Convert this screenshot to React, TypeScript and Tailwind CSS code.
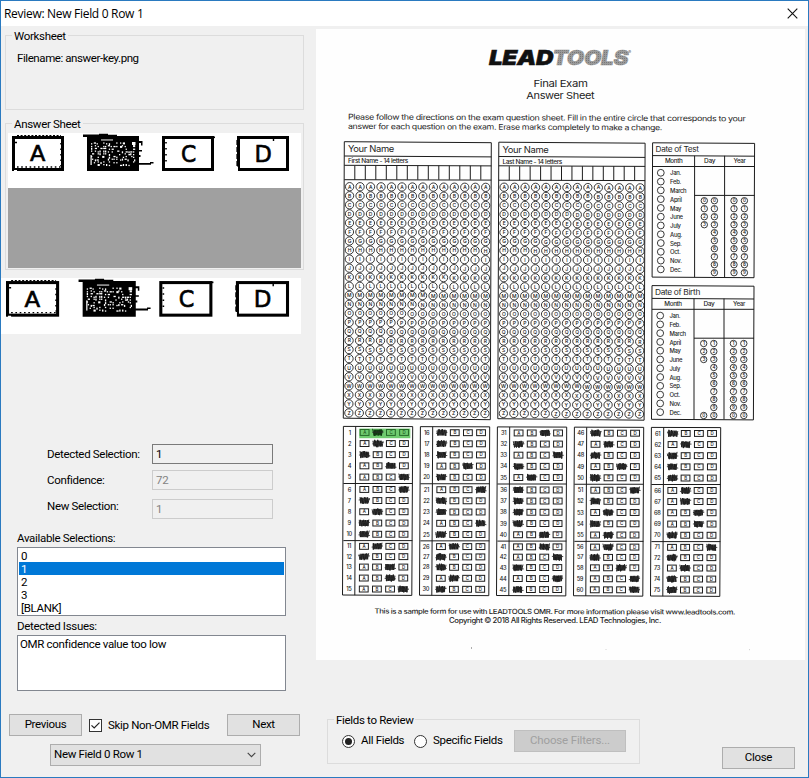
import type { ReactNode } from 'react';

const SHEET_FONT = 'Inter, "Noto Sans", sans-serif';

// Small deterministic generator so scribbles look the same on every render.
function makeRandom(seed: number) {
  let s = seed * 7919 + 17;
  return () => {
    s = (s * 1103515245 + 12345) % 2147483648;
    return s / 2147483648;
  };
}

type LineProps = {
  x: number;
  y: number;
  size: number;
  w?: number;
  weight?: number;
  rotate?: number;
  fill?: string;
  children: ReactNode;
};

function Line({ x, y, size, w, weight = 400, rotate = 0, fill = '#1e1e1e', children }: LineProps) {
  return (
    <text
      x={x}
      y={y}
      fontSize={size}
      fontWeight={weight}
      fill={fill}
      textLength={w}
      lengthAdjust="spacingAndGlyphs"
      transform={rotate ? `rotate(${rotate} ${x} ${y})` : undefined}
    >
      {children}
    </text>
  );
}

function Bubble({ x, y, r, label, size }: { x: number; y: number; r: number; label?: string; size: number }) {
  return (
    <g>
      <circle cx={x} cy={y} r={r} fill="none" stroke="#222" strokeWidth={0.9} />
      {label && (
        <text x={x} y={y + size * 0.36} fontSize={size} textAnchor="middle" fill="#111" fontWeight={500}>
          {label}
        </text>
      )}
    </g>
  );
}

const LETTERS = 'ABCDEFGHIJKLMNOPQRSTUVWXYZ'.split('');

function NameBlock({ x, y, w, subtitle, subW }: { x: number; y: number; w: number; subtitle: string; subW: number }) {
  const step = w / 14;
  return (
    <g>
      <path
        d={`M${x} ${y} L${x + w} ${y + 1} L${x + w - 1} ${y + 278} L${x - 1} ${y + 276.5} Z`}
        fill="none"
        stroke="#1c1c1c"
        strokeWidth={1}
      />
      <path
        d={`M${x} ${y + 14.3} L${x + w} ${y + 15.2} M${x} ${y + 23.6} L${x + w} ${y + 24.2} M${x} ${y + 38} L${x + w} ${y + 38.4}`}
        stroke="#1c1c1c"
        strokeWidth={1}
      />
      {Array.from({ length: 13 }, (_, i) => (
        <path
          key={i}
          d={`M${x + step * (i + 1)} ${y + 24} V${y + 38}`}
          stroke="#1c1c1c"
          strokeWidth={1}
        />
      ))}
      <Line x={x + 3.7} y={y + 10.3} size={8.8} w={46}>Your Name</Line>
      <Line x={x + 3.7} y={y + 21.3} size={5.6} w={subW} weight={500}>{subtitle}</Line>
      {LETTERS.map((l, r) =>
        Array.from({ length: 14 }, (_, c) => (
          <Bubble
            key={`${l}${c}`}
            x={x + 5.3 + c * 10.47 - r * 0.03}
            y={y + 45 + r * 9.05 + c * 0.05}
            r={4.15}
            label={l}
            size={5}
          />
        )),
      )}
    </g>
  );
}

const MONTHS = ['Jan.', 'Feb.', 'March', 'April', 'May', 'June', 'July', 'Aug.', 'Sep.', 'Oct.', 'Nov.', 'Dec.'];

type DateProps = { x: number; y: number; h: number; title: string; titleW: number; digits: string[]; tens: string[]; };

function DateBlock({ x, y, h, title, titleW, digits, tens }: DateProps) {
  return (
    <g>
      <path
        d={`M${x} ${y} L${x + 102} ${y + 0.6} L${x + 101.4} ${y + h + 0.6} L${x - 0.5} ${y + h} Z`}
        fill="none"
        stroke="#1c1c1c"
        strokeWidth={1}
      />
      <path
        d={`M${x} ${y + 12.8} L${x + 102} ${y + 13.4} M${x} ${y + 23.7} H${x + 102} M${x + 42} ${y + 13} V${y + h} M${x + 72} ${y + 13} V${y + h} M${x + 42} ${y + 52.6} H${x + 102}`}
        stroke="#1c1c1c"
        strokeWidth={1}
      />
      <Line x={x + 3} y={y + 9.2} size={7.6} w={titleW}>{title}</Line>
      <Line x={x + 12.3} y={y + 20.6} size={5.7} w={17.5} weight={500}>Month</Line>
      <Line x={x + 51.5} y={y + 20.6} size={5.7} w={11} weight={500}>Day</Line>
      <Line x={x + 81} y={y + 20.6} size={5.7} w={12} weight={500}>Year</Line>
      {MONTHS.map((m, i) => (
        <g key={m}>
          <Bubble x={x + 8.2} y={y + 30 + i * 8.78} r={3.4} size={4} />
          <Line x={x + 17.5} y={y + 32.6 + i * 8.78} size={5.9} weight={500}>{m}</Line>
        </g>
      ))}
      {digits.map((d, i) => {
        const cy = y + 57.9 + i * 8;
        return (
          <g key={d}>
            {tens.includes(d) && <Bubble x={x + 51.7} y={cy} r={3.2} label={d} size={4.6} />}
            <Bubble x={x + 61.8} y={cy} r={3.2} label={d} size={4.6} />
            <Bubble x={x + 81.4} y={cy} r={3.2} label={d} size={4.6} />
            <Bubble x={x + 91.8} y={cy} r={3.2} label={d} size={4.6} />
          </g>
        );
      })}
    </g>
  );
}

const ANSWERS = ['BBACDDABAABACCD', 'AAACADAADABAABA', 'CADABAAAACCDADA', 'ABACADABABBACDD', 'ABAAABBCCADABAA'];
const ROW_Y = [432.4, 443.5, 454.6, 465.8, 477, 489.4, 500.5, 511.7, 523, 534.2, 546.3, 556.6, 567, 578, 589];

function Scribble({ x, y, seed, green }: { x: number; y: number; seed: number; green?: boolean }) {
  const rnd = makeRandom(seed);
  const points: string[] = [];
  for (let i = 0; i <= 12; i++) {
    const px = x - 4.6 + (i * 9.2) / 12 + (rnd() - 0.5) * 1.4;
    const py = y + (i % 2 ? 2.8 : -2.8) + (rnd() - 0.5) * 1.8;
    points.push(`${px.toFixed(1)},${py.toFixed(1)}`);
  }
  return (
    <g>
      <rect x={x - 4.3} y={y - 2.9} width={8.6} height={5.9} fill={green ? '#1f5a22' : '#4a4a4a'} />
      <polyline points={points.join(' ')} fill="none" stroke={green ? '#0f3511' : '#1c1c1c'} strokeWidth={0.9} />
      <path d={`M${x - 5.5} ${y + rnd() * 2 - 1} L${x + 5.8} ${y + rnd() * 3 - 1.5}`} stroke="#2a2a2a" strokeWidth={0.9} />
    </g>
  );
}

function AnswerBlock({ index }: { index: number }) {
  const x = 343.4 + index * 77;
  const dy = index * 0.25;
  return (
    <g>
      <path
        d={`M${x} ${426.4 + dy} L${x + 69.3} ${426.6 + dy} L${x + 68.4} ${595.4 + dy} L${x - 0.9} ${595 + dy} Z M${x + 12.3} ${426.5 + dy} L${x + 11.4} ${595.2 + dy} M${x} ${483.5 + dy} H${x + 69} M${x} ${540.6 + dy} H${x + 69}`}
        fill="none"
        stroke="#1c1c1c"
        strokeWidth={1}
      />
      {index === 0 && <rect x={359.3} y={428.6} width={51} height={9.6} fill="#6fcb6f" />}
      {ROW_Y.map((ry, r) => {
        const y = ry + dy;
        const shift = -r * 0.06;
        const green = index === 0 && r === 0;
        return (
          <g key={r}>
            <text x={x + 6.3 + shift} y={y + 2.1} fontSize={5.7} fontWeight={500} textAnchor="middle" fill="#1a1a1a">
              {index * 15 + r + 1}
            </text>
            {['A', 'B', 'C', 'D'].map((l, c) => {
              const cx = x + 21.2 + c * 13.15 + shift;
              if (ANSWERS[index][r] === l) return <Scribble key={l} x={cx} y={y} seed={index * 15 + r + 1} green={green} />;
              return (
                <g key={l}>
                  <rect x={cx - 4.4} y={y - 2.9} width={8.8} height={5.9} fill="none" stroke={green ? '#256b28' : '#1c1c1c'} strokeWidth={1} />
                  <text x={cx} y={y + 1.6} fontSize={4.4} fontWeight={500} textAnchor="middle" fill={green ? '#1d5a20' : '#111'}>
                    {l}
                  </text>
                </g>
              );
            })}
          </g>
        );
      })}
    </g>
  );
}

function ScannedSheet() {
  return (
    <svg className="block h-[631px] w-[489px] bg-[#fefefe]" viewBox="316 29 489 631" fontFamily={SHEET_FONT}>
      <defs>
        <pattern id="halftone" width="2" height="2" patternUnits="userSpaceOnUse">
          <rect width="2" height="2" fill="#9a9a9a" />
          <rect width="1" height="1" fill="#787878" />
        </pattern>
      </defs>
      <g fontStyle="italic">
        <text x={489} y={65} fontSize={20.5} fontWeight={900} textLength={64} lengthAdjust="spacingAndGlyphs" fill="#111" stroke="#111" strokeWidth={0.5}>LEAD</text>
        <text x={552.5} y={65} fontSize={20.5} fontWeight={900} textLength={75.5} lengthAdjust="spacingAndGlyphs" fill="url(#halftone)" stroke="#959595" strokeWidth={0.6}>TOOLS</text>
        <text x={628} y={53.5} fontSize={4.5} fill="#666">®</text>
      </g>
      <Line x={533.5} y={87} size={9.6} w={54}>Final Exam</Line>
      <Line x={526.3} y={99} size={9.6} w={68}>Answer Sheet</Line>
      <Line x={348} y={119.6} size={7.9} w={397.5} rotate={0.25}>
        Please follow the directions on the exam question sheet. Fill in the entire circle that corresponds to your
      </Line>
      <Line x={348} y={129} size={7.9} w={314} rotate={0.25}>
        answer for each question on the exam. Erase marks completely to make a change.
      </Line>
      <NameBlock x={344.3} y={141.7} w={147} subtitle="First Name - 14 letters" subW={60} />
      <NameBlock x={498.8} y={142.2} w={146.3} subtitle="Last Name - 14 letters" subW={59.5} />
      <DateBlock
        x={652.6}
        y={142.8}
        h={134.3}
        title="Date of Test"
        titleW={43}
        digits={['0', '1', '2', '3', '4', '5', '6', '7', '8', '9']}
        tens={['0', '1', '2', '3']}
      />
      <DateBlock
        x={652}
        y={285.6}
        h={133.7}
        title="Date of Birth"
        titleW={45}
        digits={['1', '2', '3', '4', '5', '6', '7', '8', '9', '0']}
        tens={['1', '2', '3', '0']}
      />
      {ANSWERS.map((_, i) => (
        <AnswerBlock key={i} index={i} />
      ))}
      <Line x={374.5} y={613.6} size={7} w={360.5} weight={500} rotate={0.15}>
        This is a sample form for use with LEADTOOLS OMR. For more information please visit www.leadtools.com.
      </Line>
      <Line x={449} y={623.2} size={7} w={212} weight={500}>
        Copyright © 2018 All Rights Reserved. LEAD Technologies, Inc.
      </Line>
      <path d="M471.5 647 v2" stroke="#999" strokeWidth={0.8} />
      <path d="M749.5 649 v1.2 M606 649 v1" stroke="#ccc" strokeWidth={0.8} />
    </svg>
  );
}

function speckles() {
  const rnd = makeRandom(5);
  const out: { x: number; y: number; w: number; h: number }[] = [];
  for (let row = 0; row < 9; row++) {
    for (let col = 0; col < 16; col++) {
      if (rnd() < 0.64) {
        out.push({
          x: 91 + col * 2.8 + Math.floor(rnd() * 2),
          y: 142.4 + row * 2.7 + Math.floor(rnd() * 2) * 0.8,
          w: rnd() < 0.25 ? 2.2 : 1.3,
          h: rnd() < 0.25 ? 2 : 1.3,
        });
      }
    }
  }
  return out;
}

const SPECKLES = speckles();

// Enlarged row of four answer boxes, the second one scribbled over.
function AnswerStrip({ className, viewBox }: { className: string; viewBox: string }) {
  return (
    <svg className={className} viewBox={viewBox} preserveAspectRatio="none" fontFamily='"DejaVu Sans", sans-serif'>
      <g fill="none" stroke="#000" strokeWidth={3}>
        <rect x={13.5} y={137.5} width={49} height={32} />
        <rect x={163.5} y={137.5} width={49} height={32} />
        <rect x={238.5} y={137.5} width={49} height={32} />
      </g>
      <g stroke="#000" fill="none">
        <path d="M17 135.5 H61" strokeWidth={1.2} strokeDasharray="2 1.6" />
        <path d="M17 167 H61" strokeWidth={1.4} strokeDasharray="1.6 2.6" />
        <path d="M61 143 V166" strokeWidth={1.6} strokeDasharray="1.5 4" />
        <path d="M166 142 V166" strokeWidth={1.6} strokeDasharray="1.5 4.5" />
        <path d="M212 137.3 h3" strokeWidth={1.6} />
        <path d="M237.2 140 V167" strokeWidth={1.6} strokeDasharray="5 2" />
        <path d="M273.5 138 v3 M17 142.5 h-2" strokeWidth={1.4} />
      </g>
      <path d="M14 171.5 h3 v-1.5 h-3z M236 166.5 h2 v5 h-2z" fill="#fff" />
      <g fill="#000" stroke="#000" strokeWidth={0.6}>
        <text x={30} y={161.2} fontSize={20.5} textLength={15} lengthAdjust="spacingAndGlyphs">A</text>
        <text x={181} y={161.8} fontSize={23} textLength={15} lengthAdjust="spacingAndGlyphs">C</text>
        <text x={254.5} y={161.8} fontSize={23} textLength={17} lengthAdjust="spacingAndGlyphs">D</text>
      </g>
      <path d="M87 137 L83 137 V134.5 H99 V133.8 H108 V134.8 H117 V136 H139 V141 H142.5 V145.5 H141 V143 H139 V150 H142 V151.5 H139 V155 H140.5 V157 H139 V163 H150 V162 H153.5 V163.5 H151 V164.8 H139 V171 H87 Z" fill="#000" />
      <rect x={101} y={139.3} width={12} height={1.3} fill="#bbb" />
      <g fill="#fff">
        {SPECKLES.map((s, i) => (
          <rect key={i} x={s.x} y={s.y} width={s.w} height={s.h} />
        ))}
        <rect x={90.5} y={155} width={1.2} height={10} />
        <rect x={132} y={142} width={3.5} height={3} />
      </g>
    </svg>
  );
}

function GroupBox({ title, className, children }: { title: string; className: string; children?: ReactNode }) {
  return (
    <fieldset className={`border border-[#dcdcdc] ${className}`}>
      <legend className="ml-[6px] h-[13px] px-[2px] leading-[15px]">{title}</legend>
      {children}
    </fieldset>
  );
}

function Button({ className, children }: { className: string; children: ReactNode }) {
  return (
    <button className={`flex h-[22px] items-center justify-center border border-[#adadad] bg-[#e1e1e1] ${className}`}>
      {children}
    </button>
  );
}

function Field({ label, value, className, inputClass, labelClass }: { label: string; value: string; className: string; inputClass: string; labelClass: string }) {
  return (
    <div className={`flex ${className}`}>
      <span className={`ml-[46px] w-[105px] whitespace-nowrap leading-[20px] ${labelClass}`}>{label}</span>
      <span className={`h-5 w-[121px] border pl-[3px] leading-[19px] ${inputClass}`}>{value}</span>
    </div>
  );
}

function LeftColumn() {
  return (
    <div className="flex w-[315px] flex-col pt-[3px]">
      <GroupBox title="Worksheet" className="ml-1 h-[81px] w-[299px]">
        <div className="ml-[11px] mt-[9px] leading-[15px] tracking-[-0.42px]">Filename: answer-key.png</div>
      </GroupBox>
      <GroupBox title="Answer Sheet" className="ml-1 mt-[7px] h-[153px] w-[299px]">
        <div className="ml-[2px] mt-[3px] w-[293px]">
          <AnswerStrip className="block h-[55px] w-[293px] bg-white" viewBox="8 133 293 55" />
          <div className="h-20 bg-[#a0a0a0]" />
        </div>
      </GroupBox>
      <AnswerStrip className="mt-2 block h-14 w-[300px] shrink-0 bg-white" viewBox="7.1 133 293.6 55" />

      <Field label="Detected Selection:" value="1" className="mt-[110px]" inputClass="border-[#7a7a7a]" labelClass="" />
      <Field label="Confidence:" value="72" className="mt-[6px]" inputClass="border-[#cccccc] text-[#838383]" labelClass="" />
      <Field label="New Selection:" value="1" className="mt-[9px]" inputClass="border-[#cccccc] text-[#838383]" labelClass="-mt-[3px]" />

      <div className="ml-4 mt-[11px] h-[17px] leading-[17px]">Available Selections:</div>
      <ul className="ml-4 h-[69px] w-[269px] border border-[#828790] bg-white p-px leading-[14px]">
        {['0', '1', '2', '3', '[BLANK]'].map((item) => (
          <li key={item} className={`h-[13px] pl-[2px] ${item === '1' ? 'bg-[#0078d7] text-white' : ''}`}>
            {item}
          </li>
        ))}
      </ul>
      <div className="ml-4 mt-px h-[18px] leading-[18px]">Detected Issues:</div>
      <div className="ml-4 h-14 w-[269px] border border-[#828790] bg-white px-[2px] pt-px leading-[15px]">
        OMR confidence value too low
      </div>

      <div className="ml-2 mt-[23px] flex items-center">
        <Button className="w-[73px]">Previous</Button>
        <span className="ml-[7px] flex size-[13px] items-center justify-center border border-[#333] bg-white">
          <svg className="size-[11px]" viewBox="0 0 11 11">
            <path d="M1.5 5.3 L4.2 8 L9.5 2.6" fill="none" stroke="#222" strokeWidth={1.2} />
          </svg>
        </span>
        <span className="ml-[6px] w-[119px] whitespace-nowrap leading-[20px]">Skip Non-OMR Fields</span>
        <Button className="w-[73px]">Next</Button>
      </div>
      <div className="ml-[49px] mt-2 flex h-[22px] w-[211px] items-center justify-between border border-[#adadad] bg-[#e1e1e1] pl-[3px] pr-1">
        <span>New Field 0 Row 1</span>
        <svg className="h-[6px] w-[9px]" viewBox="0 0 9 6">
          <path d="M0.7 0.9 L4.5 4.7 L8.3 0.9" fill="none" stroke="#444" strokeWidth={1.1} />
        </svg>
      </div>
    </div>
  );
}

function Radio({ checked }: { checked?: boolean }) {
  return (
    <span className="flex size-[13px] shrink-0 items-center justify-center rounded-full border border-[#333] bg-white">
      {checked && <span className="size-[7px] rounded-full bg-[#222]" />}
    </span>
  );
}

export default function App() {
  return (
    <div className="flex h-[778px] w-[809px] flex-col border border-[#2a7ac0] bg-[#f0f0f0] font-[Roboto,'Liberation_Sans',sans-serif] text-[11.5px] tracking-[-0.32px] text-black">
      <header className="flex h-[25px] shrink-0 items-center justify-between bg-white pl-[3px] pr-[10px]">
        <h1 className="font-['Open_Sans','Liberation_Sans',sans-serif] text-[12px] tracking-[-0.3px]">Review: New Field 0 Row 1</h1>
        <svg className="size-[11px]" viewBox="0 0 11 11">
          <path d="M0.7 0.7 L10.3 10.3 M10.3 0.7 L0.7 10.3" stroke="#111" strokeWidth={1.1} />
        </svg>
      </header>
      <main className="flex min-h-0 flex-1">
        <LeftColumn />
        <section className="flex flex-1 flex-col pt-[3px]">
          <ScannedSheet />
          <div className="flex items-start">
            <GroupBox title="Fields to Review" className="ml-[11px] mt-[53px] h-[51px] w-[313px]">
              <div className="mt-[4px] flex h-[22px] items-center pl-[14px]">
                <Radio checked />
                <span className="ml-[6px] w-[53px] whitespace-nowrap">All Fields</span>
                <Radio />
                <span className="ml-[6px] w-[81px] whitespace-nowrap">Specific Fields</span>
                <button className="flex h-[22px] w-[112px] items-center justify-center border border-[#bfbfbf] bg-[#cccccc] tracking-[-0.15px] text-[#a0a0a0]">
                  Choose Filters...
                </button>
              </div>
            </GroupBox>
            <Button className="ml-[82px] mt-[87px] w-[73px]">Close</Button>
          </div>
        </section>
      </main>
    </div>
  );
}
